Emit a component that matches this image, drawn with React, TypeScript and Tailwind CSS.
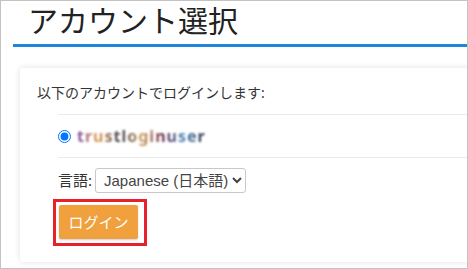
const font = "font-['Noto_Sans','Noto_Sans_CJK_JP',sans-serif]";

export default function App() {
  return (
    <div
      className={`w-[468px] h-[269px] overflow-hidden border border-[#c3c3c3] bg-white text-[#333] ${font}`}
    >
      {/* header */}
      <h1 className="pl-[27px] pt-[1px] text-[30px] leading-[38px] font-normal text-[#222]">
        アカウント選択
      </h1>
      <div className="ml-[12px] mt-[4px] h-[3px] bg-[#1e86dc]" />

      {/* card */}
      <div className="ml-[19px] mr-[-20px] mt-[21px] h-[194px] rounded-[3px] bg-white pl-[17px] pt-[14px] shadow-[0_0_6px_rgba(0,0,0,0.12)]">
        <p className="text-[14px] leading-[22px] text-[#333]">
          以下のアカウントでログインします:
        </p>

        <div className="ml-[21px] mt-[10px]">
          <div className="h-px bg-[#ebebeb]" />
          <label className="flex h-[42px] items-center gap-[6px]">
            <input
              type="radio"
              defaultChecked
              className="m-0 h-[13px] w-[13px] accent-[#0075ff]"
            />
            <span className="bg-[linear-gradient(90deg,#7a4a9a,#e0a050,#3a3a4a,#d0a060,#6a3050,#4a8ac0,#2a2a3a)] bg-clip-text text-[16px] font-bold tracking-[1px] text-transparent blur-[0.8px]">
              trustloginuser
            </span>
          </label>
          <div className="h-px bg-[#ebebeb]" />

          <div className="mt-[10px] flex items-center gap-[3px]">
            <span className="text-[15px] text-[#333]">言語:</span>
            <select
              defaultValue="ja"
              className="h-[25px] w-[151px] rounded-[3px] border border-[#c8c8c8] bg-white pl-[4px] font-['Liberation_Sans','Noto_Sans_CJK_JP',sans-serif] text-[15px] leading-[20px] text-[#444]"
            >
              <option value="ja">Japanese (日本語)</option>
              <option value="en">English</option>
            </select>
          </div>

          <div className="ml-[-5px] mt-[6px] w-[94px] border-[3px] border-[#e8202a] p-[3px] pb-[4px]">
            <button className="h-[34px] w-[79px] rounded-[2px] bg-[#f0a03c] text-[15px] text-white shadow-[0_1px_2px_rgba(0,0,0,0.2)]">
              ログイン
            </button>
          </div>
        </div>
      </div>
    </div>
  );
}
